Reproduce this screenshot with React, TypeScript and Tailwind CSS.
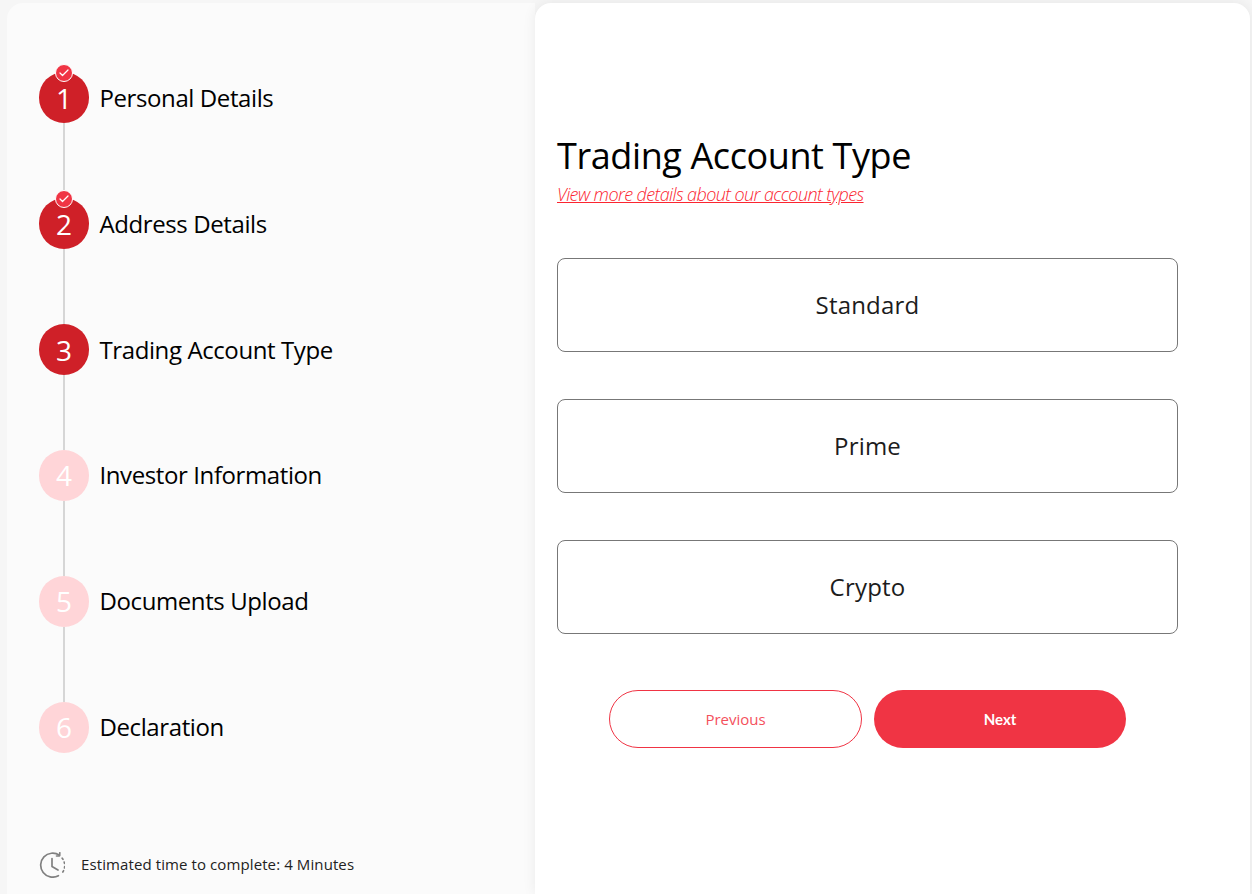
import { Check } from 'lucide-react'

const steps = [
  { n: 1, label: 'Personal Details', state: 'done' },
  { n: 2, label: 'Address Details', state: 'done' },
  { n: 3, label: 'Trading Account Type', state: 'active' },
  { n: 4, label: 'Investor Information', state: 'todo' },
  { n: 5, label: 'Documents Upload', state: 'todo' },
  { n: 6, label: 'Declaration', state: 'todo' },
]

const accountTypes = ['Standard', 'Prime', 'Crypto']

function ClockIcon() {
  return (
    <svg width="26" height="26" viewBox="0 0 26 26" fill="none" stroke="#808080" strokeWidth="1.7" strokeLinecap="round" strokeLinejoin="round">
      <path d="M20.4 3.2A12 12 0 1 0 19.4 23.7" />
      <path d="M20.8 0.8l-0.2 3-3.1 0.2" />
      <path d="M23.2 6.2A12 12 0 0 1 22.8 21.4" strokeDasharray="1.4 3" />
      <path d="M13 6.5v8l6 3.6" />
    </svg>
  )
}

function Step({ n, label, state, last }: { n: number; label: string; state: string; last: boolean }) {
  const circle = state === 'todo' ? 'bg-[#ffd5d8]' : 'bg-[#cf2028]'
  return (
    <div className="relative flex h-[51px] items-center">
      {!last && <div className="absolute left-[24px] top-[51px] h-[75px] w-[2px] bg-[#d6d6d6]" />}
      <div className={`relative flex h-[51px] w-[50px] items-center justify-center rounded-full text-[28px] text-white ${circle}`}>
        {n}
        {state === 'done' && (
          <span className="absolute left-[16px] top-[-8px] flex h-[18px] w-[18px] items-center justify-center rounded-full border border-white bg-[#f03444]">
            <Check size={12} strokeWidth={2.5} color="white" />
          </span>
        )}
      </div>
      <span className="ml-[10.5px] text-[24px] tracking-[-0.4px] text-black">{label}</span>
    </div>
  )
}

export default function App() {
  return (
    <div className="flex h-[894px] w-[1252px] overflow-hidden bg-[#f6f6f6] pt-[3px] pl-[7px] pr-[2px] font-['Open_Sans',sans-serif]">
      <aside className="flex w-[528px] flex-col rounded-tl-[16px] bg-[#fbfbfb] pl-[32px] pt-[69.4px]">
        <div className="flex flex-col gap-[74.85px]">
          {steps.map((s, i) => (
            <Step key={s.n} n={s.n} label={s.label} state={s.state} last={i === steps.length - 1} />
          ))}
        </div>
        <div className="mt-[99px] flex items-center gap-[16px] text-[15px] tracking-[0.1px] text-[#222]">
          <ClockIcon />
          <span>Estimated time to complete: 4 Minutes</span>
        </div>
      </aside>
      <main className="flex-1 rounded-t-[16px] bg-white pl-[22px] pt-[129px] shadow-[0_0_14px_rgba(0,0,0,0.07)]">
        <h1 className="text-[36px] leading-[48px] tracking-[-0.4px] text-black">Trading Account Type</h1>
        <a className="mt-[2px] block text-[18px] font-light italic leading-[24px] tracking-[-0.6px] text-[#fb2530] underline">
          View more details about our account types
        </a>
        <div className="mt-[52px] flex w-[621px] flex-col gap-[47px]">
          {accountTypes.map((t) => (
            <button key={t} className="h-[94px] rounded-[8px] border border-[#777] bg-white text-[24px] tracking-[0.2px] text-[#1c1c1c]">
              {t}
            </button>
          ))}
        </div>
        <div className="mt-[56px] ml-[52px] flex gap-[12px] font-['Lato',sans-serif] text-[15px]">
          <button className="h-[58px] w-[253px] rounded-full border border-[#f03444] bg-white font-['Open_Sans',sans-serif] text-[#f4505c]">
            Previous
          </button>
          <button className="h-[58px] w-[252px] rounded-full bg-[#f03444] font-bold text-white">Next</button>
        </div>
      </main>
    </div>
  )
}
